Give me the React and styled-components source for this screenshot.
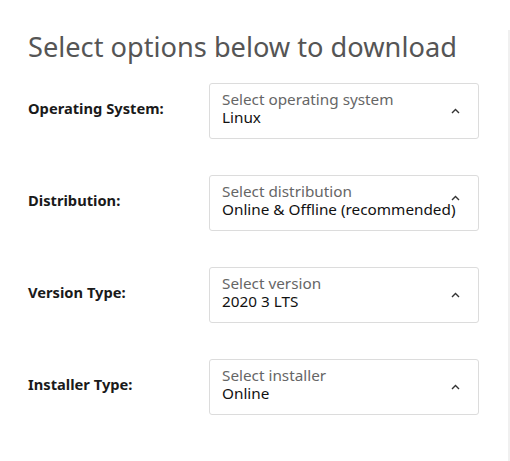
import React from "react";
import styled, { createGlobalStyle } from "styled-components";

const GlobalStyle = createGlobalStyle`
  html, body {
    margin: 0;
    padding: 0;
    background: #fff;
    font-family: "Noto Sans", "Open Sans", sans-serif;
  }
`;

const options = [
  { label: "Operating System:", placeholder: "Select operating system", value: "Linux" },
  { label: "Distribution:", placeholder: "Select distribution", value: "Online & Offline (recommended)" },
  { label: "Version Type:", placeholder: "Select version", value: "2020 3 LTS" },
  { label: "Installer Type:", placeholder: "Select installer", value: "Online" }
];

const Page = styled.div`
  display: flex;
  width: 510px;
  height: 461px;
  overflow: hidden;
`;

const Main = styled.div`
  flex: 1;
  padding: 29px 0 0 28px;
`;

const Side = styled.div`
  width: 2px;
  margin-top: 30px;
  background: #f0f0f0;
`;

const Heading = styled.h1`
  margin: 0 0 18px 0;
  font-size: 27.2px;
  font-weight: 400;
  color: #555;
  line-height: 36px;
`;

const Form = styled.div`
  display: flex;
  flex-direction: column;
  gap: 36px;
`;

const Row = styled.div`
  display: grid;
  grid-template-columns: 181px 270px;
  align-items: center;
`;

const Label = styled.label`
  font-size: 14.7px;
  font-weight: 700;
  color: #1a1a1a;
  margin-top: -7px;
`;

const SelectBox = styled.div`
  position: relative;
  height: 56px;
  box-sizing: border-box;
  border: 1px solid #dcdcdc;
  border-radius: 3px;
  padding: 6px 12px 0 12px;
  display: flex;
  flex-direction: column;
  line-height: 19px;
`;

const Placeholder = styled.span`
  font-size: 15.3px;
  color: #666;
`;

const Value = styled.span`
  font-size: 15.3px;
  color: #111;
  white-space: nowrap;
  margin-top: -1px;
`;

const Chevron = styled.svg`
  position: absolute;
  right: 18px;
  top: ${p => (p.$high ? 19 : 24)}px;
`;

function Select({ placeholder, value }) {
  return (
    <SelectBox>
      <Placeholder>{placeholder}</Placeholder>
      <Value>{value}</Value>
      <Chevron width="9" height="6" viewBox="0 0 9 6" $high={value.length > 20}>
        <path d="M1 5 L4.5 1.5 L8 5" fill="none" stroke="#333" strokeWidth="1.4" />
      </Chevron>
    </SelectBox>
  );
}

export default function App() {
  return (
    <Page>
      <GlobalStyle />
      <Main>
        <Heading>Select options below to download</Heading>
        <Form>
          {options.map(o => (
            <Row key={o.label}>
              <Label>{o.label}</Label>
              <Select placeholder={o.placeholder} value={o.value} />
            </Row>
          ))}
        </Form>
      </Main>
      <Side />
    </Page>
  );
}
